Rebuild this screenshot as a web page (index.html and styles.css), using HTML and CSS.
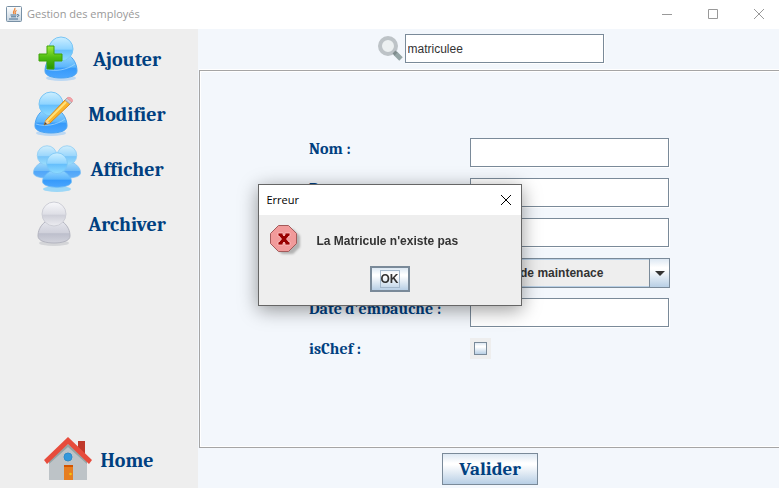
FILE: index.html
```html
<!DOCTYPE html>
<html lang="fr">
<head>
<meta charset="utf-8">
<meta name="viewport" content="width=device-width, initial-scale=1">
<title>Gestion des employés</title>
<link rel="stylesheet" href="styles.css">
</head>
<body>
<svg class="defs" aria-hidden="true">
  <defs>
    <linearGradient id="head" x1="0" y1="0" x2="0" y2="1"><stop offset="0" stop-color="#cdefff"/><stop offset=".5" stop-color="#8fd4ff"/><stop offset=".56" stop-color="#66bffc"/><stop offset="1" stop-color="#8fdcff"/></linearGradient>
    <linearGradient id="torso" x1="0" y1="0" x2="0" y2="1"><stop offset="0" stop-color="#8ed3ff"/><stop offset=".5" stop-color="#5cb5fb"/><stop offset=".56" stop-color="#369afa"/><stop offset="1" stop-color="#4aa6ff"/></linearGradient>
    <linearGradient id="greyHead" x1="0" y1="0" x2="0" y2="1"><stop offset="0" stop-color="#f8f8fb"/><stop offset=".5" stop-color="#dedfe6"/><stop offset=".56" stop-color="#cfd0d9"/><stop offset="1" stop-color="#ececf1"/></linearGradient>
    <linearGradient id="greyTorso" x1="0" y1="0" x2="0" y2="1"><stop offset="0" stop-color="#e4e5ec"/><stop offset=".5" stop-color="#d0d1db"/><stop offset=".56" stop-color="#bdbfcc"/><stop offset="1" stop-color="#d2d3dc"/></linearGradient>
    <linearGradient id="green" x1="0" y1="0" x2="0" y2="1"><stop offset="0" stop-color="#a2ea3c"/><stop offset=".5" stop-color="#4fbd12"/><stop offset="1" stop-color="#279402"/></linearGradient>
    <g id="person">
      <ellipse cx="20" cy="42" rx="15" ry="3" fill="#4aa6ff" opacity=".3"/>
      <path d="M11 20C6 24 4 30 4 35c0 5 8 7 16 7s16-2 16-7c0-5-2-11-7-15z" fill="url(#torso)" stroke="#4ba4f2"/>
      <path d="M5 33c9 3 21 1 29-5" fill="none" stroke="#a7dcff" stroke-width="1" opacity=".7"/>
      <circle cx="20" cy="13" r="12" fill="url(#head)" stroke="#79c5f5"/>
    </g>
    <g id="member">
      <path d="M11 24C5 28 2 32 2 37c0 5 9 7 18 7s18-2 18-7c0-5-3-9-9-13z" fill="url(#torso)" stroke="#63b6f5"/>
      <circle cx="20" cy="14" r="13" fill="url(#head)" stroke="#79c5f5"/>
    </g>
  </defs>
</svg>
<div class="window">
  <header class="titlebar">
    <svg class="java" viewBox="0 0 16 16" aria-hidden="true">
      <defs><linearGradient id="jb" x1="0" y1="0" x2="0" y2="1"><stop offset="0" stop-color="#fff"/><stop offset="1" stop-color="#c5d3df"/></linearGradient></defs>
      <rect x=".5" y=".5" width="15" height="15" rx="1" fill="url(#jb)" stroke="#7890a5"/>
      <path d="M8.700 2c1.500 2-3 3-.8 6M10.600 4.500c-2 1-2 1.500-1 3.500" fill="none" stroke="#ee8333" stroke-width="1.300"/>
      <path d="M4.500 9h6M5 10.800h5M3 13h9M11 8.800c2.500-.8 2.500 1.500 0 2" fill="none" stroke="#486f91"/>
    </svg>
    <h1 class="title">Gestion des employés</h1>
    <div class="controls">
      <button class="control" type="button" aria-label="Réduire"><svg viewBox="0 0 10 10"><path d="M0 5.500h10"/></svg></button>
      <button class="control" type="button" aria-label="Agrandir"><svg viewBox="0 0 10 10"><path d="M.5.5h9v9h-9z"/></svg></button>
      <button class="control" type="button" aria-label="Fermer"><svg viewBox="0 0 10 10"><path d="M0 0l10 10M10 0L0 10"/></svg></button>
    </div>
  </header>

  <div class="body">
    <nav class="sidebar">
      <button class="item" type="button">
        <svg viewBox="2 2 48 48" aria-hidden="true">
          <use href="#person" x="6" y="2"/>
          <path d="M12 12h7v8h8v7h-8v8h-7v-8H4v-7h8z" fill="url(#green)" stroke="#3ea30b"/>
        </svg>
        Ajouter
      </button>
      <button class="item" type="button">
        <svg viewBox="1 2 48 48" aria-hidden="true">
          <use href="#person" y="2"/>
          <path d="M13 36l2-5L34 11l5 4-20 19z" fill="#fbb52b" stroke="#d98b1c"/>
          <path d="M16 32L35 13" stroke="#ffe27b" stroke-width="2"/>
          <path d="M13 36l2-5 4 3z" fill="#f3cf9b"/><path d="M13 36l1-3 2 2z" fill="#444"/>
          <path d="M34 11l2-2 5 4-2 2z" fill="#c9ccd4" stroke="#aaa"/>
          <path d="M36 9c2-2 7 1 5 4z" fill="#f7a5a9" stroke="#ec9aa0"/>
        </svg>
        Modifier
      </button>
      <button class="item" type="button">
        <svg viewBox="2 2 48 48" aria-hidden="true">
          <g transform="translate(-1 1) scale(.75)" opacity=".85"><use href="#member"/></g>
          <g transform="translate(19 1) scale(.75)" opacity=".85"><use href="#member"/></g>
          <ellipse cx="24" cy="45" rx="14" ry="3" fill="#4ac0ff" opacity=".5"/>
          <g transform="translate(8 8) scale(.8)"><use href="#member"/></g>
        </svg>
        Afficher
      </button>
      <button class="item" type="button">
        <svg viewBox="1 1 48 48" aria-hidden="true">
          <ellipse cx="23" cy="43" rx="15" ry="3" fill="#888a99" opacity=".25"/>
          <path d="M14 22C9 26 7 31 7 36c0 5 8 7 16 7s16-2 16-7c0-5-2-10-7-14z" fill="url(#greyTorso)" stroke="#b4b5c0"/>
          <circle cx="23" cy="14" r="12" fill="url(#greyHead)" stroke="#cdced6"/>
        </svg>
        Archiver
      </button>
      <button class="item home" type="button">
        <svg viewBox="0 1 48 48" aria-hidden="true">
          <path d="M34 5h7v17l-7-6z" fill="#c0392b"/>
          <path d="M5 24L24 7l19 17v20H5z" fill="#bdc3c7"/>
          <path d="M5 25v3L24 11l19 17v-3L24 8z" fill="#95a5a6"/>
          <path d="M24 1L0 24l3 4L24 8l21 20 3-4z" fill="#e74c3c"/>
          <circle cx="24" cy="21" r="4" fill="#3498db" stroke="#2f8bcb"/>
          <path d="M20 29h9v15h-9z" fill="#e67e22"/><path d="M20 29h9v2h-9z" fill="#d35400"/>
          <circle cx="26.500" cy="38" r="1.300" fill="#f1c40f"/>
        </svg>
        Home
      </button>
    </nav>

    <main class="main">
      <div class="search">
        <svg viewBox="0 0 28 28" aria-hidden="true">
          <path d="M18 18l6 6" stroke="#95a5a6" stroke-width="5"/>
          <circle cx="11" cy="11" r="8" fill="#ecf0f1" stroke="#bdc3c7" stroke-width="4"/>
          <path d="M17 17l2 2" stroke="#7f8c8d" stroke-width="4"/>
        </svg>
        <input class="field" type="text" value="matriculee" aria-label="Matricule recherchée">
      </div>

      <form class="panel" id="employee">
        <label for="nom">Nom :</label><input class="field" id="nom" type="text">
        <label for="prenom">Prenom :</label><input class="field" id="prenom" type="text">
        <label for="matricule">Matricule :</label><input class="field" id="matricule" type="text">
        <label for="service">Service :</label>
        <div class="combo">
          <select id="service"><option>Service de maintenace</option></select>
          <span class="arrow" aria-hidden="true"><svg viewBox="0 0 10 5"><path d="M0 0h10L5 5z"/></svg></span>
        </div>
        <label for="date">Date d'embauche :</label><input class="field" id="date" type="text">
        <label for="chef">isChef :</label><span class="check"><input id="chef" type="checkbox"></span>
      </form>

      <div class="actions">
        <button class="submit" type="submit" form="employee">Valider</button>
      </div>
    </main>
  </div>
</div>

<div class="dialog" role="alertdialog" aria-labelledby="dlg-title" aria-describedby="dlg-text">
  <div class="dialog-bar">
    <h2 class="dialog-title" id="dlg-title">Erreur</h2>
    <button class="dialog-close" type="button" aria-label="Fermer"><svg viewBox="0 0 10 10"><path d="M0 0l10 10M10 0L0 10"/></svg></button>
  </div>
  <div class="dialog-message">
    <svg viewBox="0 0 32 32" aria-hidden="true">
      <defs><filter id="soft"><feGaussianBlur stdDeviation="1"/></filter></defs>
      <path d="M12 4h11l7 7v11l-7 7H12l-7-7V11z" fill="#777" opacity=".5" filter="url(#soft)"/>
      <path d="M8.500.5h10l8 8v10l-8 8h-10l-8-8v-10z" fill="#f19a9a" stroke="#a35a5a"/>
      <path d="M8 8h5v2l1 1 1-1V8h5v3h-1l-2.500 3 2.500 3h1v3h-5v-2l-1-1-1 1v2H8v-3h1l2.500-3L9 11H8z" fill="#990000" stroke="#ffc4c4" stroke-width=".8"/>
    </svg>
    <p id="dlg-text">La Matricule n'existe pas</p>
  </div>
  <button class="ok" type="button"><span>OK</span></button>
</div>
</body>
</html>
```
FILE: styles.css
```css
* { box-sizing: border-box; }

:root {
  --edge: #7a8a99;
  --navy: #004080;
  --paper: #f3f7fc;
  --grey: #eeeeee;
  --line: #a5a5a5;
  --metal: linear-gradient(#dde8f3 0%, #ffffff 30%, #ffffff 36%, #b8cfe5 100%);
}

body {
  margin: 0;
  font: 12px/16px "Liberation Sans", Arial, sans-serif;
  color: #333;
}

button { padding: 0; border: 0; background: none; font: inherit; color: inherit; }
svg { display: block; }
.defs { position: absolute; width: 0; height: 0; }

.window { display: flex; flex-direction: column; min-height: 100vh; }

.titlebar { display: flex; align-items: center; height: 29px; padding-left: 6px; padding-bottom: 2px; background: #fff; }
.java { width: 16px; height: 16px; margin-right: 5px; }
.title { margin: 0; font: 11px/16px "Open Sans", "Noto Sans", sans-serif; color: #999; }
.controls { display: flex; align-self: stretch; margin-left: auto; }
.control { display: grid; place-items: center; width: 46px; padding-left: 6px; }
.control svg { width: 10px; height: 10px; overflow: visible; fill: none; stroke: #999; }

.body { display: grid; grid-template-columns: 198px 1fr; flex: 1; }

.sidebar { display: flex; flex-direction: column; padding-top: 3px; background: var(--grey); }
.item {
  display: flex; align-items: center; justify-content: center; gap: 8px;
  height: 55px;
  font: bold 20px/24px Cambria, Caladea, "Liberation Serif", serif;
  color: var(--navy);
}
.item svg { width: 48px; height: 48px; overflow: visible; }
.home { margin-top: auto; }

.main { display: flex; flex-direction: column; padding-left: 1px; background: var(--paper); }
.search { display: flex; align-items: center; justify-content: center; height: 41px; padding: 0 0 2px 2px; }
.search svg { width: 28px; height: 28px; }

.field {
  width: 199px; height: 29px; padding: 2px;
  border: 1px solid var(--edge);
  background: #fff;
  box-shadow: 1px 1px #fff;
  font: 12px/16px "Liberation Sans", Arial, sans-serif;
  color: #333;
}

.panel {
  display: grid; grid-template-columns: 161px 200px; grid-auto-rows: 30px; row-gap: 10px;
  justify-content: center; align-content: start;
  flex: 1;
  padding-top: 67px;
  border: solid var(--line); border-width: 1px 0 1px 1px;
  box-shadow: 0 -1px #fff, inset 0 -1px #fff, inset 1px 1px #fff;
}
.panel label { font: bold 16px/22px Cambria, Caladea, "Liberation Serif", serif; color: var(--navy); white-space: nowrap; }

.combo { display: grid; grid-template-columns: 1fr 20px; border: 1px solid var(--edge); }
.combo select {
  grid-area: 1 / 1 / 2 / 3;
  width: 100%; padding: 0 20px 0 2px;
  appearance: none;
  border: 1px solid #b8cfe5; border-radius: 0;
  background: var(--grey);
  font: bold 12px/16px "Liberation Sans", Arial, sans-serif;
  color: #333;
}
.arrow {
  grid-area: 1 / 2; z-index: 1;
  display: grid; place-items: center;
  border-left: 1px solid var(--edge);
  background: var(--metal);
  pointer-events: none;
}
.arrow svg { width: 10px; height: 5px; fill: #333; }

.check { display: grid; place-items: center; width: 21px; height: 21px; background: var(--grey); }
.check input { width: 13px; height: 13px; margin: 0; appearance: none; border: 1px solid var(--edge); background: var(--metal); }

.actions { display: flex; align-items: center; justify-content: center; height: 40px; padding: 2px 0 0 2px; }
.submit {
  padding: 4px 16px;
  border: 1px solid var(--edge);
  background: var(--metal);
  font: bold 19px/22px Cambria, Caladea, "Liberation Serif", serif;
  color: var(--navy);
}

.dialog {
  position: fixed; top: calc(50% - 60px); left: calc(50% - 132px); z-index: 2;
  display: flex; flex-direction: column;
  width: 264px; padding-bottom: 13px;
  border: 1px solid #666;
  background: var(--grey);
  box-shadow: 0 4px 18px rgba(0, 0, 0, .4);
}
.dialog-bar { display: flex; align-items: center; justify-content: space-between; height: 30px; padding: 0 10px 0 8px; background: #fff; }
.dialog-title { margin: 0; font: 11px/16px "Open Sans", "Noto Sans", sans-serif; color: #000; }
.dialog-close svg { width: 10px; height: 10px; overflow: visible; fill: none; stroke: #000; }
.dialog-message { display: flex; align-items: center; gap: 15px; padding: 10px 11px 9px; }
.dialog-message svg { width: 32px; height: 32px; }
.dialog-message p { margin: 0; font-weight: bold; }
.ok { align-self: center; padding: 2px 8px; border: 2px solid var(--edge); background: var(--metal); font-weight: bold; }
.ok span { display: block; border: 1px solid #a3b8cc; }
```
